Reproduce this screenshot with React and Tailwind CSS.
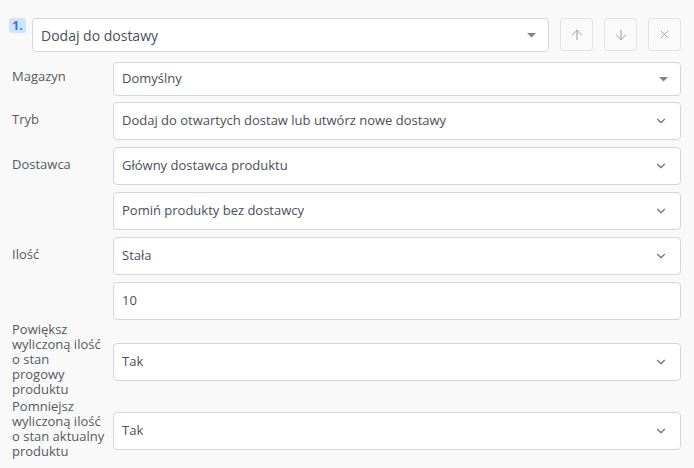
import { ArrowUp, ArrowDown, X, ChevronDown } from "lucide-react";

const font = { fontFamily: '"Open Sans", "Noto Sans", sans-serif' };

function Caret() {
    return (
        <svg width="9" height="5" viewBox="0 0 9 5" className="shrink-0">
            <path d="M0 0h9L4.5 4.5z" fill="#80858c" />
        </svg>
    );
}

function Select({ value, tall = true, caret = false, big = false, className = "" }) {
    return (
        <div
            className={`flex min-w-0 flex-1 items-center justify-between rounded-[4px] border border-[#d3d7dc] bg-white pl-[8px] pr-[12px] text-[#4a4f57] ${tall ? "h-[38px]" : "h-[34px]"} ${big ? "text-[14px]" : "text-[13px]"} ${className}`}
        >
            <span className="truncate">{value}</span>
            {caret ? <Caret /> : <ChevronDown className="h-[14px] w-[14px] text-[#6b7280]" strokeWidth={2} />}
        </div>
    );
}

function Row({ label, children, className = "", labelClass = "" }) {
    return (
        <div className={`flex ${className}`}>
            <div className={`w-[101px] shrink-0 pr-1 text-[13px] leading-[15px] text-[#555a61] ${labelClass}`}>{label}</div>
            {children}
        </div>
    );
}

const IconBtn = ({ children }) => (
    <button className="flex h-[33px] w-[33px] items-center justify-center rounded-[4px] border border-[#e1e3e6] bg-[#fafafa] text-[#92969d]">
        {children}
    </button>
);

export default function App() {
    return (
        <div className="min-h-[468px] bg-[#f9f9f9] pl-[9px] pr-[13px] pt-[18px]" style={font}>
            <div className="flex items-start">
                <span className="mr-[6px] flex h-[15px] w-[17px] items-center justify-center rounded-[3px] bg-[#cfe4fa] text-[12px] font-bold leading-none text-[#2b7ad6]">1.</span>
                <Select value="Dodaj do dostawy" tall={false} caret big className="!pr-[12px]" />
                <div className="ml-[11px] flex gap-[11px]">
                    <IconBtn><ArrowUp className="h-[16px] w-[16px]" strokeWidth={1.4} /></IconBtn>
                    <IconBtn><ArrowDown className="h-[16px] w-[16px]" strokeWidth={1.4} /></IconBtn>
                    <IconBtn><X className="h-[13px] w-[13px]" strokeWidth={1.5} /></IconBtn>
                </div>
            </div>

            <div className="pl-[3px]">
                <Row label="Magazyn" className="mt-[10px]" labelClass="pt-[7px]">
                    <Select value="Domyślny" tall={false} caret />
                </Row>
                <Row label="Tryb" className="mt-[6px]" labelClass="pt-[10px]">
                    <Select value="Dodaj do otwartych dostaw lub utwórz nowe dostawy" />
                </Row>
                <Row label="Dostawca" className="mt-[7px]" labelClass="pt-[10px]">
                    <Select value="Główny dostawca produktu" />
                </Row>
                <Row label="" className="mt-[7px]">
                    <Select value="Pomiń produkty bez dostawcy" />
                </Row>
                <Row label="Ilość" className="mt-[7px]" labelClass="pt-[10px]">
                    <Select value="Stała" />
                </Row>
                <Row label="" className="mt-[7px]">
                    <div className="flex h-[38px] flex-1 items-center rounded-[4px] border border-[#d3d7dc] bg-white pl-[8px] text-[13px] text-[#4a4f57]">10</div>
                </Row>
                <Row label={<>Powiększ<br />wyliczoną ilość<br />o stan<br />progowy<br />produktu</>} className="mt-[2px] items-center">
                    <Select value="Tak" className="mt-[4px]" />
                </Row>
                <Row label={<>Pomniejsz<br />wyliczoną ilość<br />o stan aktualny<br />produktu</>} className="mt-[2px] items-center">
                    <Select value="Tak" className="mt-[3px]" />
                </Row>
            </div>
        </div>
    );
}
